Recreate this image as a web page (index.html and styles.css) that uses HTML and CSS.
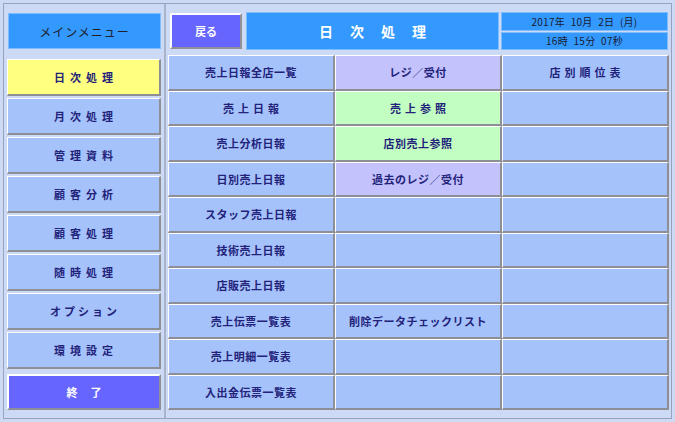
FILE: index.html
```html
<!DOCTYPE html>
<html lang="ja">
<head>
<meta charset="utf-8">
<link rel="stylesheet" href="styles.css">
</head>
<body>
<div class="frame">
  <div class="left">
    <div class="menu-title">メインメニュー</div>
    <div class="side-btn yellow sp">日次処理</div>
    <div class="side-btn sp">月次処理</div>
    <div class="side-btn sp">管理資料</div>
    <div class="side-btn sp">顧客分析</div>
    <div class="side-btn sp">顧客処理</div>
    <div class="side-btn sp">随時処理</div>
    <div class="side-btn sp kana">オプション</div>
    <div class="side-btn sp">環境設定</div>
    <div class="side-btn exit">終了</div>
  </div>
  <div class="right">
    <div class="top">
      <div class="back">戻る</div>
      <div class="title">日次処理</div>
      <div class="clock">
        <div class="date">2017年 10月 2日 (月)</div>
        <div class="time">16時 15分 07秒</div>
      </div>
    </div>
    <div class="grid">
      <div class="cell">売上日報全店一覧</div>
      <div class="cell lav">レジ／受付</div>
      <div class="cell sp2">店別順位表</div>

      <div class="cell sp2">売上日報</div>
      <div class="cell green sp2">売上参照</div>
      <div class="cell"></div>

      <div class="cell">売上分析日報</div>
      <div class="cell green">店別売上参照</div>
      <div class="cell"></div>

      <div class="cell">日別売上日報</div>
      <div class="cell lav">過去のレジ／受付</div>
      <div class="cell"></div>

      <div class="cell">スタッフ売上日報</div>
      <div class="cell"></div>
      <div class="cell"></div>

      <div class="cell">技術売上日報</div>
      <div class="cell"></div>
      <div class="cell"></div>

      <div class="cell">店販売上日報</div>
      <div class="cell"></div>
      <div class="cell"></div>

      <div class="cell">売上伝票一覧表</div>
      <div class="cell">削除データチェックリスト</div>
      <div class="cell"></div>

      <div class="cell">売上明細一覧表</div>
      <div class="cell"></div>
      <div class="cell"></div>

      <div class="cell">入出金伝票一覧表</div>
      <div class="cell"></div>
      <div class="cell"></div>
    </div>
  </div>
</div>
</body>
</html>
```

FILE: styles.css
```css
html, body {
  margin: 0;
  padding: 0;
}
body {
  background: #cddaf6;
  font-family: "Noto Sans CJK JP", "Noto Sans", sans-serif;
  width: 675px;
  height: 422px;
  overflow: hidden;
}
.frame {
  margin: 3px;
  height: 416px;
  box-sizing: border-box;
  border: 1px solid #98a2bc;
  display: flex;
}
.left {
  width: 162px;
  box-sizing: border-box;
  border-right: 2px solid #a9b3c9;
  padding: 9px 3px 0 3px;
  display: flex;
  flex-direction: column;
  gap: 2px;
}
.menu-title {
  height: 36px;
  margin: 0 0 8px 1px;
  background: #3399ff;
  border: 1px solid #7fbcfb;
  box-sizing: border-box;
  display: flex;
  align-items: center;
  justify-content: center;
  font-size: 12px;
  color: #1e1e2a;
  letter-spacing: 1px;
}
.side-btn {
  height: 37px;
  box-sizing: border-box;
  background: #a6c2fb;
  border-top: 1px solid #ffffff;
  border-left: 1px solid #ffffff;
  border-right: 2px solid #8e8e96;
  border-bottom: 2px solid #8e8e96;
  display: flex;
  align-items: center;
  justify-content: center;
  font-size: 11px;
  font-weight: bold;
  color: #22227a;
}
.side-btn.sp {
  letter-spacing: 5px;
  padding-left: 5px;
}
.side-btn.kana {
  letter-spacing: 3px;
  padding-left: 3px;
}
.side-btn.yellow {
  background: #ffff80;
}
.side-btn.exit {
  margin-top: 3px;
  height: 36px;
  background: #6666ff;
  color: #ffffff;
  letter-spacing: 13px;
  padding-left: 13px;
  border-top: 2px solid #ffffff;
  border-left: 2px solid #ffffff;
}
.right {
  flex: 1;
  padding: 8px 2px 0 2px;
  display: flex;
  flex-direction: column;
}
.top {
  height: 38px;
  display: flex;
}
.back {
  margin: 1px 0 0 2px;
  width: 72px;
  height: 36px;
  box-sizing: border-box;
  background: #6666ff;
  border-top: 2px solid #ffffff;
  border-left: 2px solid #ffffff;
  border-right: 2px solid #909098;
  border-bottom: 2px solid #909098;
  display: flex;
  align-items: center;
  justify-content: center;
  color: #ffffff;
  font-size: 11px;
  font-weight: bold;
}
.title {
  margin-left: 4px;
  width: 253px;
  height: 38px;
  box-sizing: border-box;
  background: #3399ff;
  border: 1px solid #7fbcfb;
  display: flex;
  align-items: center;
  justify-content: center;
  color: #ffffff;
  font-size: 14px;
  font-weight: bold;
  letter-spacing: 17px;
  padding-left: 17px;
}
.clock {
  margin-left: 2px;
  width: 167px;
  height: 38px;
  display: flex;
  flex-direction: column;
  gap: 1px;
}
.clock > div {
  flex: 1;
  background: #3399ff;
  border: 1px solid #7fbcfb;
  box-sizing: border-box;
  display: flex;
  align-items: center;
  justify-content: center;
  font-size: 10px;
  color: #1a1a30;
  word-spacing: 3px;
  letter-spacing: 0.3px;
}
.grid {
  margin-top: 5px;
  height: 355px;
  display: grid;
  grid-template-columns: repeat(3, 1fr);
  grid-template-rows: repeat(10, 1fr);
}
.cell {
  box-sizing: border-box;
  background: #a6c2fb;
  border-top: 1px solid #ffffff;
  border-left: 1px solid #ffffff;
  border-right: 2px solid #8e8e96;
  border-bottom: 2px solid #8e8e96;
  display: flex;
  align-items: center;
  justify-content: center;
  font-size: 11px;
  font-weight: bold;
  color: #22227a;
  letter-spacing: 0.5px;
}
.cell.sp2 {
  letter-spacing: 4px;
  padding-left: 4px;
}
.cell.lav {
  background: #c4c2fd;
}
.cell.green {
  background: #c2fec2;
}
```
